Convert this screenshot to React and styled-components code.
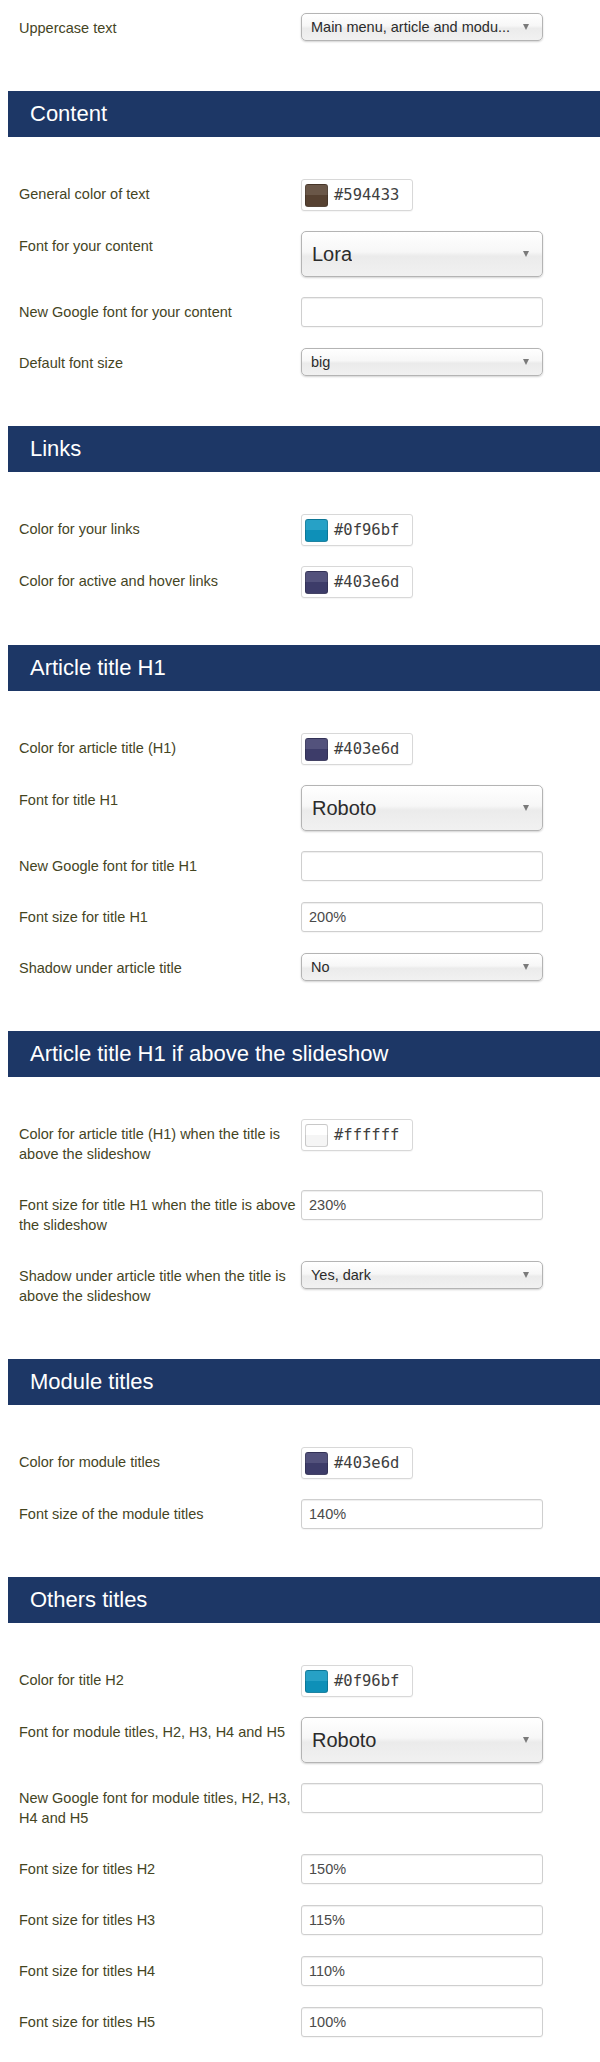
import React from 'react';
import styled, { createGlobalStyle } from 'styled-components';

const sections = [
    {
        title: null,
        rows: [
            { label: 'Uppercase text', type: 'select', value: 'Main menu, article and modu...' },
        ],
    },
    {
        title: 'Content',
        rows: [
            { label: 'General color of text', type: 'color', value: '#594433' },
            { label: 'Font for your content', type: 'bigselect', value: 'Lora' },
            { label: 'New Google font for your content', type: 'input', value: '' },
            { label: 'Default font size', type: 'select', value: 'big' },
        ],
    },
    {
        title: 'Links',
        rows: [
            { label: 'Color for your links', type: 'color', value: '#0f96bf' },
            { label: 'Color for active and hover links', type: 'color', value: '#403e6d' },
        ],
    },
    {
        title: 'Article title H1',
        rows: [
            { label: 'Color for article title (H1)', type: 'color', value: '#403e6d' },
            { label: 'Font for title H1', type: 'bigselect', value: 'Roboto' },
            { label: 'New Google font for title H1', type: 'input', value: '' },
            { label: 'Font size for title H1', type: 'input', value: '200%' },
            { label: 'Shadow under article title', type: 'select', value: 'No' },
        ],
    },
    {
        title: 'Article title H1 if above the slideshow',
        rows: [
            { label: 'Color for article title (H1) when the title is above the slideshow', type: 'color', value: '#ffffff' },
            { label: 'Font size for title H1 when the title is above the slideshow', type: 'input', value: '230%' },
            { label: 'Shadow under article title when the title is above the slideshow', type: 'select', value: 'Yes, dark' },
        ],
    },
    {
        title: 'Module titles',
        rows: [
            { label: 'Color for module titles', type: 'color', value: '#403e6d' },
            { label: 'Font size of the module titles', type: 'input', value: '140%' },
        ],
    },
    {
        title: 'Others titles',
        rows: [
            { label: 'Color for title H2', type: 'color', value: '#0f96bf' },
            { label: 'Font for module titles, H2, H3, H4 and H5', type: 'bigselect', value: 'Roboto' },
            { label: 'New Google font for module titles, H2, H3, H4 and H5', type: 'input', value: '' },
            { label: 'Font size for titles H2', type: 'input', value: '150%' },
            { label: 'Font size for titles H3', type: 'input', value: '115%' },
            { label: 'Font size for titles H4', type: 'input', value: '110%' },
            { label: 'Font size for titles H5', type: 'input', value: '100%' },
        ],
    },
];

const Control = ({ row }) => {
    if (row.type === 'color') {
        return (
            <ColorField>
                <Swatch $color={row.value} />
                <ColorCode>{row.value}</ColorCode>
            </ColorField>
        );
    }
    if (row.type === 'input') {
        return <TextField>{row.value}</TextField>;
    }
    return (
        <SelectBox $big={row.type === 'bigselect'}>
            <SelectText>{row.value}</SelectText>
            <Caret />
        </SelectBox>
    );
};

const App = () => {
    return (
        <>
            <GlobalStyle />
            <Page>
                {sections.map((section, i) => (
                    <Section key={i}>
                        {section.title && <SectionTitle>{section.title}</SectionTitle>}
                        {section.rows.map((row) => (
                            <Row key={row.label}>
                                <Label>{row.label}</Label>
                                <Control row={row} />
                            </Row>
                        ))}
                    </Section>
                ))}
            </Page>
        </>
    );
};

const GlobalStyle = createGlobalStyle`
    body {
        margin: 0;
        background: #fff;
        font-family: "Liberation Sans", Arial, sans-serif;
    }
`;

const Page = styled.div`
    width: 600px;
    padding: 13px 0 0 8px;
    box-sizing: border-box;
`;

const Section = styled.section`
    display: flow-root;
    padding-bottom: 27px;
`;

const SectionTitle = styled.h3`
    margin: 0 0 42px;
    height: 46px;
    display: flex;
    align-items: center;
    padding-left: 22px;
    background-color: #1d3766;
    color: #fff;
    font-size: 22px;
    font-weight: normal;
`;

const Row = styled.div`
    display: grid;
    grid-template-columns: 280px 242px;
    column-gap: 2px;
    align-items: start;
    padding-left: 11px;
    margin-bottom: 20px;
`;

const Label = styled.label`
    padding: 5px 0 6px;
    font-size: 14.5px;
    line-height: 20px;
    color: #45451f;
`;

const SelectBox = styled.div`
    position: relative;
    display: flex;
    align-items: center;
    height: ${(p) => (p.$big ? '46px' : '28px')};
    padding: 0 24px 0 ${(p) => (p.$big ? '10px' : '9px')};
    box-sizing: border-box;
    border: 1px solid #b4b4b4;
    border-radius: 5px;
    background: linear-gradient(#ffffff 0%, #f7f7f7 45%, #ebebeb 55%, #f1f1f1 100%);
    box-shadow: 0 1px 2px rgba(0, 0, 0, 0.18);
    font-size: ${(p) => (p.$big ? '20px' : '14.5px')};
    color: #2b2b2b;
`;

const SelectText = styled.span`
    white-space: nowrap;
    overflow: hidden;
`;

const Caret = styled.span`
    position: absolute;
    right: 13px;
    top: 50%;
    margin-top: -3px;
    border-left: 3.5px solid transparent;
    border-right: 3.5px solid transparent;
    border-top: 6px solid #7a7a7a;
`;

const TextField = styled.div`
    height: 30px;
    padding: 0 7px;
    box-sizing: border-box;
    display: flex;
    align-items: center;
    border: 1px solid #cfcfcf;
    border-radius: 3px;
    box-shadow: inset 0 1px 1px rgba(0, 0, 0, 0.07), 0 1px 1px rgba(0, 0, 0, 0.04);
    background: #fff;
    font-size: 14.5px;
    color: #4a4a4a;
`;

const ColorField = styled.div`
    width: 112px;
    height: 32px;
    box-sizing: border-box;
    display: flex;
    align-items: center;
    gap: 6px;
    padding-left: 3px;
    border: 1px solid #d8d8d8;
    border-radius: 3px;
    background: #fff;
    box-shadow: 0 1px 1px rgba(0, 0, 0, 0.04);
`;

const Swatch = styled.span`
    width: 23px;
    height: 23px;
    box-sizing: border-box;
    border-radius: 3px;
    border: 1px solid rgba(0, 0, 0, 0.18);
    background:
        linear-gradient(rgba(255, 255, 255, 0.1) 50%, rgba(0, 0, 0, 0.04) 50%),
        ${(p) => p.$color};
`;

const ColorCode = styled.span`
    font-family: "DejaVu Sans Mono", "Liberation Mono", monospace;
    font-size: 15.5px;
    color: #3e3e3e;
`;

export default App;
